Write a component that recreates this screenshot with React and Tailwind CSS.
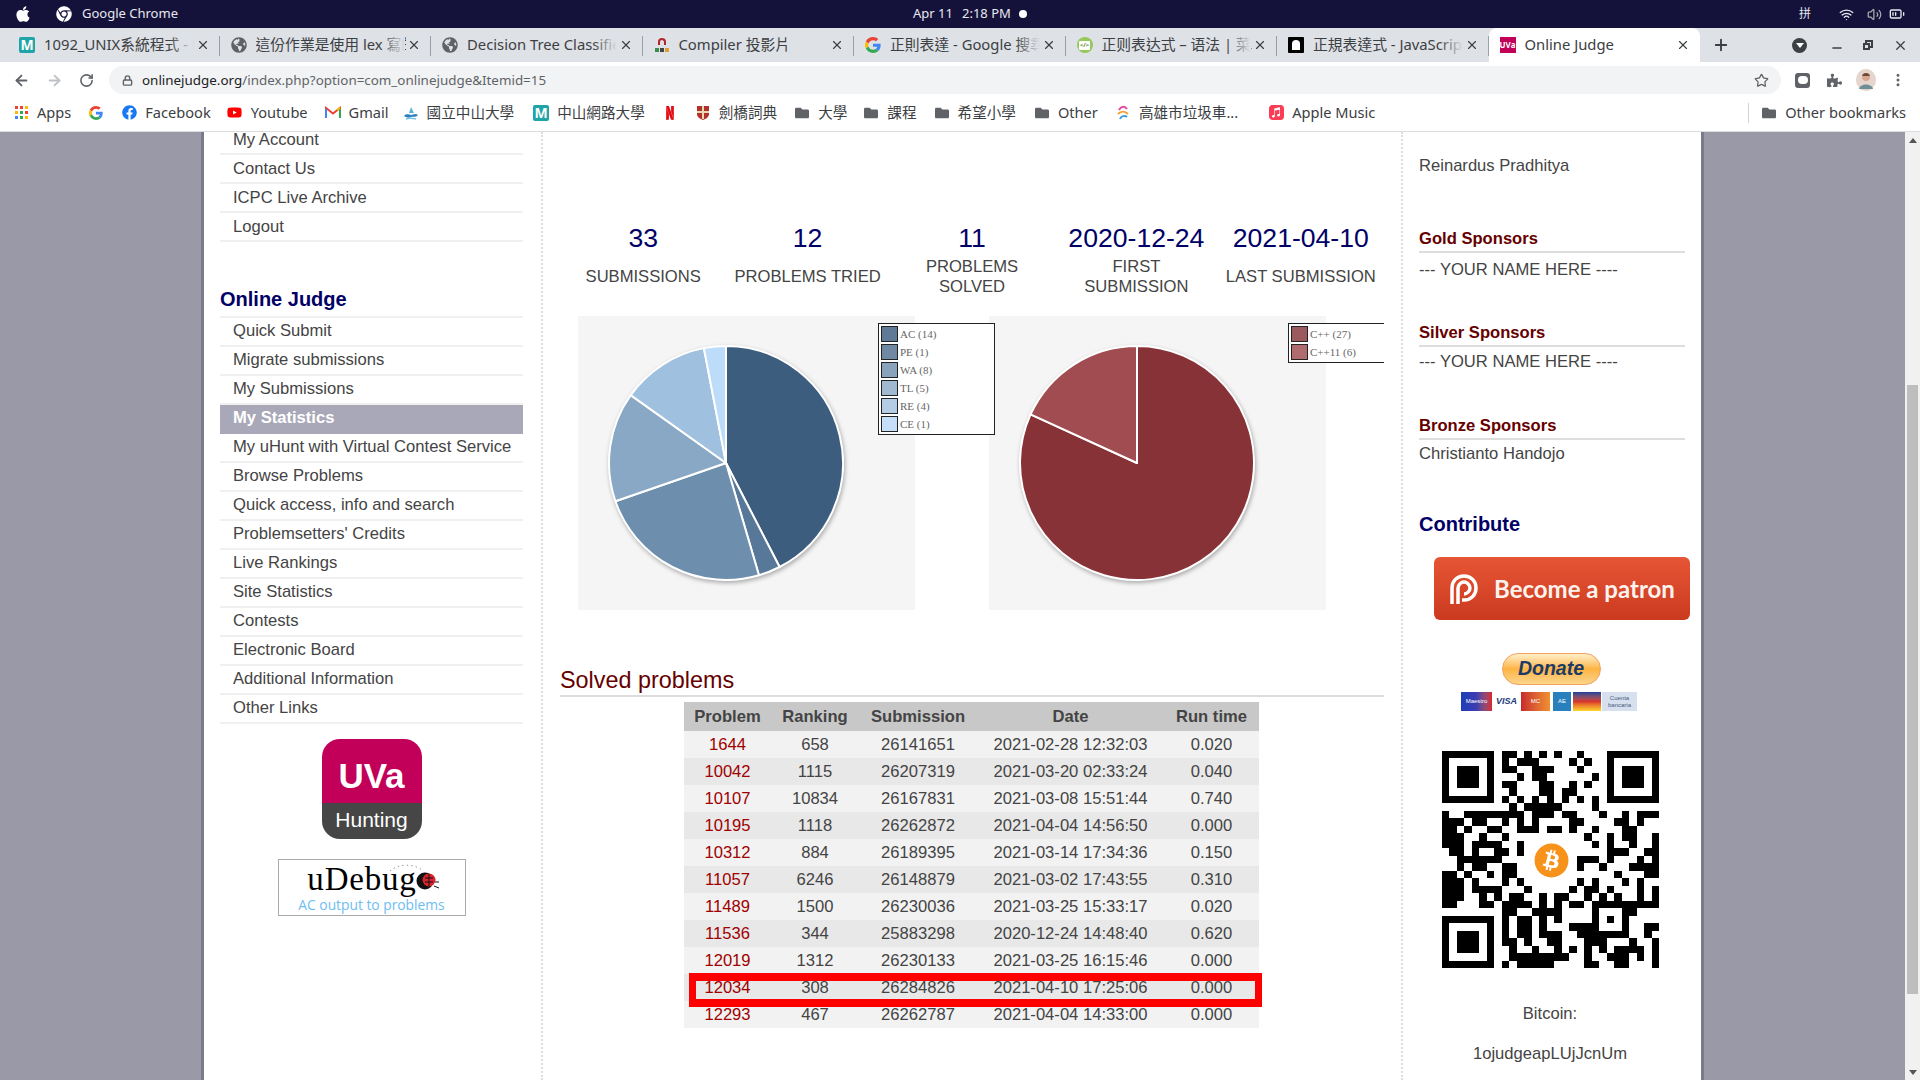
import React from "react";
import { FaApple, FaChrome, FaGlobeAmericas, FaFacebook, FaFolder, FaBitcoin, FaPuzzlePiece, FaYoutube } from "react-icons/fa";
import { SiNetflix, SiApplemusic } from "react-icons/si";
import { ArrowLeft, ArrowRight, RotateCw, Lock, Star, MoreVertical, Plus, X, Minus, Wifi, Volume2, BatteryMedium } from "lucide-react";

const menuTop = ["My Account", "Contact Us", "ICPC Live Archive", "Logout"];
const menuJudge = [
  "Quick Submit",
  "Migrate submissions",
  "My Submissions",
  "My Statistics",
  "My uHunt with Virtual Contest Service",
  "Browse Problems",
  "Quick access, info and search",
  "Problemsetters' Credits",
  "Live Rankings",
  "Site Statistics",
  "Contests",
  "Electronic Board",
  "Additional Information",
  "Other Links",
];

const stats = [
  ["33", "SUBMISSIONS", ""],
  ["12", "PROBLEMS TRIED", ""],
  ["11", "PROBLEMS SOLVED", "w-[110px]"],
  ["2020-12-24", "FIRST SUBMISSION", "w-[110px]"],
  ["2021-04-10", "LAST SUBMISSION", ""],
];

const verdicts = [
  { label: "AC (14)", value: 14, fill: "#3d5d7f", swatch: "#5f7a97" },
  { label: "PE (1)", value: 1, fill: "#577899", swatch: "#7089a3" },
  { label: "WA (8)", value: 8, fill: "#6d8fad", swatch: "#89a3bd" },
  { label: "TL (5)", value: 5, fill: "#88a8c6", swatch: "#a0b8d0" },
  { label: "RE (4)", value: 4, fill: "#a0c0df", swatch: "#b4cce4" },
  { label: "CE (1)", value: 1, fill: "#bcdcf9", swatch: "#c6dff8" },
];

const languages = [
  { label: "C++ (27)", value: 27, fill: "#873237", swatch: "#9b5a5e" },
  { label: "C++11 (6)", value: 6, fill: "#a04c51", swatch: "#b06b6f" },
];

const solved = [
  ["1644", "658", "26141651", "2021-02-28 12:32:03", "0.020"],
  ["10042", "1115", "26207319", "2021-03-20 02:33:24", "0.040"],
  ["10107", "10834", "26167831", "2021-03-08 15:51:44", "0.740"],
  ["10195", "1118", "26262872", "2021-04-04 14:56:50", "0.000"],
  ["10312", "884", "26189395", "2021-03-14 17:34:36", "0.150"],
  ["11057", "6246", "26148879", "2021-03-02 17:43:55", "0.310"],
  ["11489", "1500", "26230036", "2021-03-25 15:33:17", "0.020"],
  ["11536", "344", "25883298", "2020-12-24 14:48:40", "0.620"],
  ["12019", "1312", "26230133", "2021-03-25 16:15:46", "0.000"],
  ["12034", "308", "26284826", "2021-04-10 17:25:06", "0.000"],
  ["12293", "467", "26262787", "2021-04-04 14:33:00", "0.000"],
];

// QR modules outside the three finder squares, one string per row
const qrRows = [
  "8-9 11 13 15 18",
  "8 10-12 17 19",
  "8-9 12-14 18",
  "10 12-13 20",
  "8-9 13-14 17 19",
  "9 13-14 16-17",
  "8 10 12 14 16 18 20",
  "9 11-15 20",
  "0 3-10 12-14 16-17 21 24 26-28",
  "0-2 4-5 8 10 12 17-18 23-24 26",
  "0-1 3 6-7 10-12 14-15 17 20 24-25",
  "0-2 5 8 19 22 24-25 28",
  "0-2 4-7 10 20 22 25 28",
  "1-2 4 7-8 10 22-24 27-28",
  "2-7 18-20 22 26 28",
  "2 4-5 8-9 18 21 25-28",
  "0-1 3 6 8-9 23 27-28",
  "0-2 4 8 10 18 20 24 26",
  "0-2 4-7 11 17 19-20 22 26 28",
  "0-2 5 7 9-10 13 15-16 19 21 23 26 28",
  "0-1 5-6 8-11 13 15 17-18 20-28",
  "8-9 12-15 20 24-25",
  "8 10-11 13 15 20 22 24",
  "8 10-11 13 17-20 24 27-28",
  "8 10-11 13-15 18-24 27",
  "8-9 11 14-15 19-21 25 28",
  "9 12 15 17 19 21 23-26 28",
  "9-16 19 22-24 26 28",
  "8 10-14 19-20 23-24 28",
];

const tabs = [
  { title: "1092_UNIX系統程式 - Elearning", icon: "moodle" },
  { title: "這份作業是使用 lex 寫的嗎", icon: "globe" },
  { title: "Decision Tree Classifier", icon: "globe" },
  { title: "Compiler 投影片", icon: "slides" },
  { title: "正則表達 - Google 搜尋結果", icon: "google" },
  { title: "正则表达式 – 语法 | 菜鸟教程", icon: "runoob" },
  { title: "正規表達式 - JavaScript", icon: "js" },
  { title: "Online Judge", icon: "uva", active: true },
];

const GoogleG = ({ size = 16 }) => (
  <svg width={size} height={size} viewBox="0 0 48 48">
    <path fill="#EA4335" d="M24 9.500c3.500 0 6.700 1.300 9.100 3.500l6.800-6.800C35.800 2.400 30.300 0 24 0 14.600 0 6.500 5.400 2.600 13.200l7.900 6.200C12.400 13.700 17.700 9.500 24 9.500z" />
    <path fill="#4285F4" d="M46.900 24.500c0-1.600-.1-3.100-.4-4.500H24v9h12.900c-.6 3-2.200 5.500-4.700 7.200l7.600 5.900c4.400-4.100 7.100-10.200 7.100-17.600z" />
    <path fill="#FBBC05" d="M10.500 28.600c-.5-1.400-.8-3-.8-4.600s.3-3.200.8-4.600l-7.900-6.200C.9 16.500 0 20.100 0 24s.9 7.500 2.600 10.800l7.900-6.200z" />
    <path fill="#34A853" d="M24 48c6.500 0 11.900-2.100 15.900-5.900l-7.600-5.900c-2.200 1.400-5 2.300-8.300 2.300-6.300 0-11.600-4.200-13.500-10l-7.900 6.200C6.500 42.600 14.600 48 24 48z" />
  </svg>
);

const MoodleIcon = () => (
  <span className="flex h-4 w-4 items-center justify-center rounded-[2px] bg-[#1fa5a8] text-[14px] font-bold leading-none text-white">M</span>
);

const TabIcon = ({ type }) => {
  if (type === "moodle") return <MoodleIcon />;
  if (type === "globe") return <FaGlobeAmericas className="h-4 w-4 text-[#5f6368]" />;
  if (type === "google") return <GoogleG />;
  if (type === "slides")
    return (
      <span className="flex h-4 w-4 flex-col items-center justify-between py-px">
        <span className="h-[7px] w-2 rounded-t-full border-2 border-b-0 border-[#b3262e]" />
        <span className="flex gap-px">
          <span className="h-1 w-1 bg-[#3a8f4a]" />
          <span className="h-1 w-1 bg-[#444]" />
          <span className="h-1 w-1 bg-[#e0a030]" />
        </span>
      </span>
    );
  if (type === "runoob")
    return (
      <span className="flex h-4 w-4 items-center justify-center rounded-full bg-[#96c85a]">
        <span className="flex h-[9px] w-[11px] items-center justify-center rounded-[1px] bg-white text-[6px] font-bold leading-none text-[#5a8a30]">&lt;/&gt;</span>
      </span>
    );
  if (type === "js")
    return (
      <span className="flex h-4 w-4 items-center justify-center rounded-[1px] bg-black">
        <span className="h-2.5 w-2 rounded-t-full rounded-b-sm bg-white" />
      </span>
    );
  return (
    <span className="flex h-4 w-4 items-center justify-center bg-[#c2005a] text-[8px] font-bold leading-none text-white">UVa</span>
  );
};

const Tab = ({ title, icon, active }) => (
  <div className={`relative flex h-[34px] w-[211.5px] shrink-0 items-center pl-[11px] pr-[10px] ${active ? "rounded-t-lg bg-white" : ""}`}>
    <TabIcon type={icon} />
    <span className="ml-[9px] -mt-[2px] w-[150px] overflow-hidden whitespace-nowrap text-[14.8px] text-[#3c4043]">{title}</span>
    {!active && <span className="absolute right-[26px] top-0 h-full w-6 bg-linear-to-r from-transparent to-[#dee1e6]" />}
    <X size={14} strokeWidth={2} className="ml-auto text-[#3c4043]" />
    {!active && <span className="absolute right-0 top-[8px] h-[20px] w-px bg-[#9aa0a6]" />}
  </div>
);

const Bookmark = ({ icon, label, className = "" }) => (
  <div className={`flex shrink-0 items-center gap-2 ${className}`}>
    <span className="flex h-4 w-4 items-center justify-center">{icon}</span>
    {label && <span className="whitespace-nowrap text-[14.6px] text-[#3c4043]">{label}</span>}
  </div>
);

const Folder = () => <FaFolder className="h-[14px] w-[14px] text-[#5f6368]" />;

const AppsGrid = () => (
  <span className="grid grid-cols-3 gap-[2px]">
    {["#ea4335", "#ea4335", "#fbbc05", "#fbbc05", "#34a853", "#ea4335", "#4285f4", "#34a853", "#fbbc05"].map((c, i) => (
      <span key={i} className="h-[3px] w-[3px]" style={{ background: c }} />
    ))}
  </span>
);

const GmailIcon = () => (
  <svg width="16" height="13" viewBox="0 0 16 13">
    <path d="M1 12V2l7 5.500L15 2v10" fill="none" stroke="#ea4335" strokeWidth="2" />
    <path d="M1 12V3" stroke="#4285f4" strokeWidth="2" />
    <path d="M15 12V3" stroke="#34a853" strokeWidth="2" />
    <path d="M12 4l3-2.500" stroke="#fbbc05" strokeWidth="2" />
  </svg>
);

const SunIcon = () => (
  <svg width="16" height="16" viewBox="0 0 16 16">
    <path d="M8 2l3 6H6z" fill="#5bb2d9" />
    <path d="M1 11c3-3 5-1 7-1s4-2 7 0c-3 3-5 1-7 2s-4 1-7-1z" fill="#2b7fc0" />
    <path d="M3 14c3-1 6-1 10 0" stroke="#7cc4e4" strokeWidth="1.500" fill="none" />
  </svg>
);

const CamIcon = () => (
  <svg width="14" height="16" viewBox="0 0 14 16">
    <path d="M1 1h12v8c0 3-3 5-6 6-3-1-6-3-6-6z" fill="#b3312d" />
    <rect x="6" y="1" width="2" height="13" fill="#e9d9b0" />
    <rect x="1" y="6" width="12" height="2" fill="#e9d9b0" />
  </svg>
);

const TrashIcon = () => (
  <svg width="16" height="16" viewBox="0 0 16 16" fill="none" strokeWidth="2">
    <path d="M4 5c2-4 6-4 8-1" stroke="#e8489c" />
    <path d="M3 9c3-3 7-3 10 0" stroke="#f0a030" />
    <path d="M5 14c1-3 5-4 7-2" stroke="#3aa0d8" />
  </svg>
);

const Avatar = () => (
  <svg width="20" height="22" viewBox="0 0 20 22">
    <ellipse cx="10" cy="11" rx="10" ry="11" fill="#e6d5cc" />
    <circle cx="10" cy="8" r="4" fill="#d9a78f" />
    <path d="M6 7c1-4 7-4 8 0" fill="#6b4a3e" />
    <path d="M3 20c1-6 13-6 14 0z" fill="#6f8d96" />
  </svg>
);

const PieChart = ({ data }) => {
  const total = data.reduce((sum, d) => sum + d.value, 0);
  const cx = 148;
  const cy = 147;
  const r = 117;
  let angle = 0;
  return (
    <svg width="337" height="294" className="drop-shadow-[1px_2px_2px_rgba(0,0,0,0.3)]">
      {data.map((d) => {
        const start = angle;
        angle += (d.value / total) * Math.PI * 2;
        const x1 = cx + r * Math.sin(start);
        const y1 = cy - r * Math.cos(start);
        const x2 = cx + r * Math.sin(angle);
        const y2 = cy - r * Math.cos(angle);
        const large = angle - start > Math.PI ? 1 : 0;
        return (
          <path
            key={d.label}
            d={`M${cx} ${cy}L${x1} ${y1}A${r} ${r} 0 ${large} 1 ${x2} ${y2}Z`}
            fill={d.fill}
            stroke="#fff"
            strokeWidth="2"
            strokeLinejoin="round"
          />
        );
      })}
    </svg>
  );
};

const Legend = ({ data, className }) => (
  <div className={`absolute top-[7px] z-10 flex flex-col gap-[2px] border border-[#222] bg-white py-[2px] pl-[2px] font-['Liberation_Serif',serif] text-[11px] leading-4 text-[#666] ${className}`}>
    {data.map((d) => (
      <div key={d.label} className="flex items-center gap-[2px]">
        <span className="h-4 w-[17px] border border-[#222]" style={{ background: d.swatch }} />
        <span>{d.label}</span>
      </div>
    ))}
  </div>
);

const QrCode = () => {
  const cells = [];
  qrRows.forEach((row, y) => {
    row.split(" ").forEach((part) => {
      const [a, b] = part.split("-").map(Number);
      cells.push(<rect key={`${y}-${a}`} x={a} y={y} width={(b ?? a) - a + 1} height="1" />);
    });
  });
  const finder = (x, y) => (
    <g key={`${x}-${y}`}>
      <path d={`M${x} ${y}h7v7h-7zM${x + 1} ${y + 1}v5h5v-5z`} fillRule="evenodd" />
      <rect x={x + 2} y={y + 2} width="3" height="3" />
    </g>
  );
  return (
    <div className="relative mt-[40px] h-[217px] w-[217px] shrink-0">
      <svg width="217" height="217" viewBox="0 0 29 29" shapeRendering="crispEdges" fill="#000">
        {cells}
        {[finder(0, 0), finder(22, 0), finder(0, 22)]}
      </svg>
      <FaBitcoin className="absolute left-[92px] top-[92px] h-[35px] w-[35px] text-[#f7931a]" />
    </div>
  );
};

const Sponsor = ({ title, className }) => (
  <h3 className={`h-[26px] border-b-2 border-[#ddd] text-[16.6px] font-bold leading-[24px] text-[#660000] ${className}`}>{title}</h3>
);

export default function App() {
  return (
    <div className="flex h-screen w-[1920px] flex-col overflow-hidden bg-white font-['Liberation_Sans',sans-serif]">
      {/* System bar */}
      <div className="flex h-[28px] shrink-0 items-center whitespace-nowrap bg-[#14123a] pl-[14px] font-['Noto_Sans','Noto_Sans_CJK_TC',sans-serif] text-[13px] text-[#e8e8ee]">
        <FaApple size={18} className="shrink-0 text-white" />
        <FaChrome size={16} className="ml-[24px] shrink-0 text-white" />
        <span className="ml-[10px] w-[93px] shrink-0">Google Chrome</span>
        <span className="ml-[738px] flex w-[114px] shrink-0 items-center">
          <span className="w-[42px]">Apr 11</span>
          <span className="ml-[7px] w-[52px]">2:18 PM</span>
          <span className="ml-[5px] h-2 w-2 shrink-0 rounded-full bg-white" />
        </span>
        <span className="ml-[772px] shrink-0 text-[12px]">拼</span>
        <Wifi size={15} className="ml-[28px] shrink-0" />
        <Volume2 size={15} className="ml-[13px] shrink-0 text-[#aaa]" />
        <BatteryMedium size={16} className="ml-[7px] shrink-0" />
      </div>

      {/* Tab strip */}
      <div className="flex h-[34px] shrink-0 items-center bg-[#dee1e6] pl-[8px] font-['Noto_Sans','Noto_Sans_CJK_TC',sans-serif]">
        {tabs.map((t) => (
          <Tab key={t.title} {...t} />
        ))}
        <Plus size={18} strokeWidth={2.5} className="ml-[12px] text-[#3c4043]" />
        <span className="ml-[62px] flex h-[15px] w-[15px] items-center justify-center rounded-full bg-[#3c4043]">
          <span className="border-x-[4px] border-t-[5px] border-x-transparent border-t-white" />
        </span>
        <Minus size={14} strokeWidth={2.5} className="ml-[23px] mt-[6px] text-[#3c4043]" />
        <span className="relative ml-[19px] h-[10px] w-[10px]">
          <span className="absolute right-0 top-0 h-2 w-2 border-2 border-[#3c4043]" />
          <span className="absolute bottom-0 left-0 h-[7px] w-[7px] border-2 border-[#3c4043] bg-[#dee1e6]" />
        </span>
        <X size={15} strokeWidth={2} className="ml-[20px] text-[#3c4043]" />
      </div>

      {/* Address bar */}
      <div className="flex h-[36px] shrink-0 items-center bg-white pl-[13px] font-['Noto_Sans',sans-serif]">
        <ArrowLeft size={17} strokeWidth={2.5} className="text-[#5f6368]" />
        <ArrowRight size={17} strokeWidth={2.5} className="ml-[16px] text-[#bdc1c6]" />
        <RotateCw size={15} strokeWidth={2.5} className="ml-[16px] text-[#5f6368]" />
        <div className="ml-[15px] flex h-[28px] w-[1672px] items-center rounded-full bg-[#f1f3f4] pl-[13px] pr-[12px]">
          <Lock size={11} strokeWidth={3} className="text-[#5f6368]" />
          <span className="ml-[9px] text-[13.4px] text-[#202124]">
            onlinejudge.org<span className="text-[#5f6368]">/index.php?option=com_onlinejudge&amp;Itemid=15</span>
          </span>
          <Star size={15} strokeWidth={2} className="ml-auto text-[#5f6368]" />
        </div>
        <span className="ml-[14px] flex h-[15px] w-[15px] items-center justify-center rounded-[3px] bg-[#5f6368]">
          <span className="h-[8px] w-[10px] rounded-full bg-white" />
        </span>
        <FaPuzzlePiece size={15} className="ml-[17px] text-[#5f6368]" />
        <span className="ml-[14px] flex"><Avatar /></span>
        <MoreVertical size={16} strokeWidth={2.5} className="ml-[14px] text-[#5f6368]" />
      </div>

      {/* Bookmarks */}
      <div className="flex h-[34px] shrink-0 items-center border-b border-[#dadce0] bg-white pb-[3px] pl-[13px] font-['Noto_Sans','Noto_Sans_CJK_TC',sans-serif]">
        <div className="flex items-center gap-[17px]">
          <Bookmark icon={<AppsGrid />} label="Apps" />
          <Bookmark icon={<GoogleG size={14} />} />
          <Bookmark icon={<FaFacebook size={15} className="text-[#1877f2]" />} label="Facebook" />
          <Bookmark icon={<FaYoutube size={15} className="text-[#ff0000]" />} label="Youtube" className="-ml-[1px]" />
          <Bookmark icon={<GmailIcon />} label="Gmail" />
          <Bookmark icon={<SunIcon />} label="國立中山大學" className="-ml-[3px]" />
          <Bookmark icon={<MoodleIcon />} label="中山網路大學" className="ml-[2px]" />
          <Bookmark icon={<SiNetflix size={14} className="text-[#e50914]" />} />
          <Bookmark icon={<CamIcon />} label="劍橋詞典" />
          <Bookmark icon={<Folder />} label="大學" />
          <Bookmark icon={<Folder />} label="課程" className="-ml-[1px]" />
          <Bookmark icon={<Folder />} label="希望小學" />
          <Bookmark icon={<Folder />} label="Other" className="ml-[1px]" />
          <Bookmark icon={<TrashIcon />} label="高雄市垃圾車..." />
          <Bookmark icon={<SiApplemusic size={15} className="text-[#fa3c55]" />} label="Apple Music" className="ml-[13px]" />
        </div>
        <span className="ml-auto h-[20px] w-px bg-[#cfd2d6]" />
        <div className="ml-[12px] mr-[14px]">
          <Bookmark icon={<Folder />} label="Other bookmarks" />
        </div>
      </div>

      {/* Page */}
      <div className="flex min-h-0 flex-1 overflow-hidden bg-[#9a99a8]">
        <div className="w-[204px] shrink-0 border-r-[3px] border-[#7a7a8c]" />

        <div className="flex w-[1497px] shrink-0 bg-white text-[16.6px] text-[#444]">
          {/* Left menu */}
          <aside className="w-[339px] shrink-0 border-r-2 border-dotted border-[#ddd] pl-[16px] pr-[18px]">
            <ul className="-mt-[6px]">
              {menuTop.map((item) => (
                <li key={item} className="flex h-[29px] items-center border-b-2 border-[#f0f0f0] pl-[13px] pt-[2px]">{item}</li>
              ))}
            </ul>
            <h2 className="mt-[46px] h-[28px] text-[20px] font-bold leading-[22px] text-[#000066]">Online Judge</h2>
            <ul className="border-t-2 border-[#f0f0f0]">
              {menuJudge.map((item) =>
                item === "My Statistics" ? (
                  <li key={item} className="flex h-[29px] items-center bg-[#a9a8b8] pb-[2px] pl-[13px] font-bold text-white">{item}</li>
                ) : (
                  <li key={item} className="flex h-[29px] items-center border-b-2 border-[#f0f0f0] pl-[13px]">{item}</li>
                )
              )}
            </ul>
            <div className="mt-[15px] flex flex-col items-center">
              <div className="flex h-[100px] w-[100px] flex-col overflow-hidden rounded-[18px]">
                <div className="flex h-[64px] items-center justify-center bg-[#c2005a] pt-[11px] text-[35px] font-bold text-white">UVa</div>
                <div className="flex flex-1 items-center justify-center bg-[#464646] pb-[3px] text-[21px] text-white">Hunting</div>
              </div>
              <div className="relative mt-[20px] flex h-[57px] w-[188px] flex-col items-center border border-[#aaa]">
                <svg width="36" height="10" viewBox="0 0 36 10" className="absolute left-[110px] top-[3px]">
                  <path d="M1 8C8 1 24 0 33 7" fill="none" stroke="#999" strokeWidth="1" strokeDasharray="1.500 3" />
                </svg>
                <div className="mt-[3px] flex h-[32px] items-center pl-[4px] font-['Liberation_Serif',serif] text-[33px] leading-none tracking-[0.8px] text-black">
                  uDebug
                  <svg width="24" height="22" viewBox="0 0 24 22" className="-ml-[1px] mt-[3px]">
                    <circle cx="9" cy="11" r="8.500" fill="#111" />
                    <circle cx="13" cy="10" r="6.500" fill="#d8232a" />
                    <path d="M13 4v12M9 8h8M9 12h8" stroke="#111" />
                    <path d="M18 16l5 2M19 12h4" stroke="#111" />
                  </svg>
                </div>
                <span className="mt-[2px] font-['Open_Sans',sans-serif] text-[13.8px] leading-4 text-[#6dbdf3]">AC output to problems</span>
              </div>
            </div>
          </aside>

          {/* Main */}
          <main className="w-[860px] shrink-0 border-r-2 border-dotted border-[#ddd] pl-[17px] pr-[17px]">
            <div className="ml-[1px] mt-[90px] grid w-[822px] grid-cols-5">
              {stats.map(([num, label, wrap]) => (
                <div key={label} className="flex flex-col items-center text-center">
                  <span className="text-[26.6px] leading-[32px] text-[#000066]">{num}</span>
                  <span className={`mt-[3px] flex h-[40px] items-center leading-[20px] ${wrap}`}>{label}</span>
                </div>
              ))}
            </div>
            <div className="ml-[18px] mt-[19px] flex gap-[74px]">
              <div className="relative h-[294px] w-[337px] bg-[#f5f5f5]">
                <PieChart data={verdicts} />
                <Legend data={verdicts} className="left-[300px] w-[117px]" />
              </div>
              <div className="relative h-[294px] w-[337px] bg-[#f5f5f5]">
                <PieChart data={languages} />
                <Legend data={languages} className="left-[299px] w-[96px] border-r-0" />
              </div>
            </div>
            <h2 className="mt-[55px] h-[32px] border-b-2 border-[#ddd] text-[23.4px] leading-[30px] text-[#660000]">Solved problems</h2>
            <div className="relative ml-[124px] mt-[5px] w-[575px]">
              <table className="w-full table-fixed border-collapse text-center">
                <colgroup>
                  <col className="w-[87px]" />
                  <col className="w-[88px]" />
                  <col className="w-[118px]" />
                  <col className="w-[187px]" />
                  <col className="w-[95px]" />
                </colgroup>
                <thead>
                  <tr className="h-[29px] bg-[#c8c8c8] font-bold">
                    {["Problem", "Ranking", "Submission", "Date", "Run time"].map((h) => (
                      <th key={h} className="pt-[2px] font-bold">{h}</th>
                    ))}
                  </tr>
                </thead>
                <tbody>
                  {solved.map((row, i) => (
                    <tr key={row[0]} className={`h-[27px] ${i % 2 ? "bg-[#e8e8e8]" : "bg-[#f2f2f2]"}`}>
                      <td className="pt-[2px] text-[#a00000]">{row[0]}</td>
                      <td className="pt-[2px]">{row[1]}</td>
                      <td className="pt-[2px]">{row[2]}</td>
                      <td className="pt-[2px]">{row[3]}</td>
                      <td className="pt-[2px]">{row[4]}</td>
                    </tr>
                  ))}
                </tbody>
              </table>
              <div className="absolute left-[5px] top-[271px] h-[34px] w-[573px] border-x-[7px] border-y-[8px] border-[#ff0000]" />
            </div>
          </main>

          {/* Right column */}
          <aside className="w-[298px] shrink-0 pl-[16px]">
            <div className="flex w-[266px] flex-col">
              <p className="mt-[24px] leading-[20px]">Reinardus Pradhitya</p>
              <Sponsor title="Gold Sponsors" className="mt-[51px]" />
              <p className="mt-[7px] leading-[20px]">--- YOUR NAME HERE ----</p>
              <Sponsor title="Silver Sponsors" className="mt-[41px]" />
              <p className="mt-[5px] leading-[20px]">--- YOUR NAME HERE ----</p>
              <Sponsor title="Bronze Sponsors" className="mt-[42px]" />
              <p className="mt-[4px] leading-[20px]">Christianto Handojo</p>
              <h2 className="mt-[46px] h-[28px] text-[20px] font-bold leading-[28px] text-[#000066]">Contribute</h2>
              <div className="ml-[15px] mt-[19px] flex h-[63px] w-[256px] items-center rounded-[6px] bg-linear-to-b from-[#e65535] to-[#cb3a1e] pl-[15px] font-['Lato',sans-serif] text-[24px] font-bold text-[#fdf3ee]">
                <svg width="30" height="32" viewBox="0 0 30 32" fill="none" stroke="#fff" strokeWidth="3.500">
                  <path d="M3 31V15C3 8 8 3 15 3s12 5 12 12-5 12-12 12h-2" />
                  <path d="M9 31V15c0-3 3-6 6-6s6 3 6 6-3 6-6 6" />
                </svg>
                <span className="ml-[15px]">Become a patron</span>
              </div>
              <div className="ml-[-2px] flex w-[266px] flex-col items-center">
                <div className="ml-[2px] mt-[33px] flex h-[32px] w-[99px] items-center justify-center rounded-full border border-[#f2a15e] bg-linear-to-b from-[#fff0c8] via-[#fdb440] to-[#fbd58a] text-[19.5px] font-bold italic text-[#1c3a66]">Donate</div>
                <div className="-ml-[1px] mt-[7px] flex h-[19px] w-[177px] items-stretch gap-[1px] text-[6px] leading-[19px]">
                  <span className="w-[31px] bg-linear-to-r from-[#1a3fb8] via-[#3b3db0] to-[#d8232a] text-center text-white">Maestro</span>
                  <span className="w-[27px] text-center text-[9px] font-bold italic text-[#1a3a7a]">VISA</span>
                  <span className="w-[29px] bg-linear-to-r from-[#c8282e] to-[#f09030] text-center text-white">MC</span>
                  <span className="ml-[2px] w-[18px] bg-[#2a7fbd] text-center text-white">AE</span>
                  <span className="ml-[1px] w-[28px] bg-linear-to-b from-[#1a3f9a] via-[#d8342a] to-[#fcd52a]" />
                  <span className="flex w-[35px] items-center bg-[#d6e0ee] text-center leading-[7px] text-[#4a5a80]">Cuenta bancaria</span>
                </div>
                <QrCode />
                <p className="mt-[36px] leading-[20px]">Bitcoin:</p>
                <p className="mt-[20px] leading-[20px]">1ojudgeapLUjJcnUm</p>
              </div>
            </div>
          </aside>
        </div>

        <div className="flex-1 border-l-[3px] border-[#7a7a8c]" />

        {/* Scrollbar */}
        <div className="relative flex w-[15px] shrink-0 flex-col items-center bg-[#f1f1f1]">
          <span className="mt-[6px] border-x-[4px] border-b-[5px] border-x-transparent border-b-[#555]" />
          <span className="absolute left-[2px] top-[253px] h-[609px] w-[11px] bg-[#bebebe]" />
          <span className="mt-auto mb-[5px] border-x-[4px] border-t-[5px] border-x-transparent border-t-[#555]" />
        </div>
      </div>
    </div>
  );
}
